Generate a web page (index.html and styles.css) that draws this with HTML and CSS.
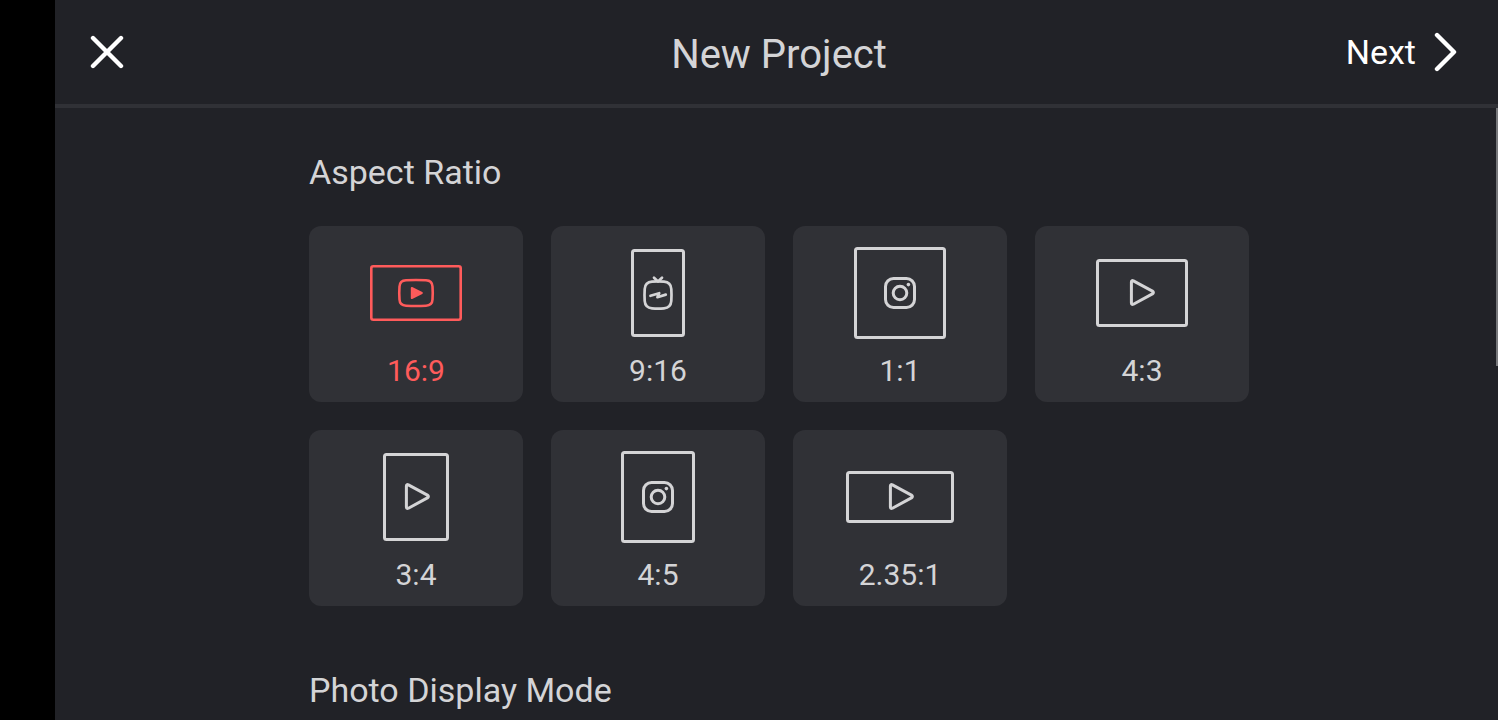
FILE: index.html
```html
<!DOCTYPE html>
<html lang="en">
<head>
    <meta charset="UTF-8">
    <meta name="viewport" content="width=device-width, initial-scale=1.0">
    <title>New Project</title>
    <link rel="stylesheet" href="styles.css">
</head>
<body>
    <!-- shared glyphs, all centered on 0,0 -->
    <svg class="sprite" aria-hidden="true">
        <symbol id="youtube" overflow="visible">
            <path d="M-10 -12.7Q0 -13.2 10 -12.7Q16.2 -12.4 16.5 -6.5Q17 0 16.5 6.5Q16.2 12.4 10 12.7Q0 13.2 -10 12.7Q-16.2 12.4 -16.5 6.5Q-17 0 -16.5 -6.5Q-16.2 -12.4 -10 -12.7Z"/>
            <path class="solid" d="M-4.2 -5L5.8 0L-4.2 5Z"/>
        </symbol>
        <symbol id="igtv" overflow="visible">
            <path class="thin" d="M-6 -11.3Q0 -11.8 6 -11.3Q12.8 -10.8 13.3 -4Q13.7 2 13.3 8Q12.8 14.8 6 15.3Q0 15.8 -6 15.3Q-12.8 14.8 -13.3 8Q-13.7 2 -13.3 -4Q-12.8 -10.8 -6 -11.3Z"/>
            <path class="thin" d="M-4 -15.3L0 -11.5L4 -15.3M-7.5 2.8L1.2 0.2L-0.6 4.2L7.8 1.6"/>
        </symbol>
        <symbol id="instagram" overflow="visible">
            <rect x="-14.5" y="-14.5" width="29" height="29" rx="8"/>
            <circle r="6.8"/>
            <circle class="dot" cx="8.4" cy="-8.4" r="1.8"/>
        </symbol>
        <symbol id="play" overflow="visible">
            <path d="M-9.6 -11Q-9.6 -13 -7.6 -12.1L11.4 -1.9Q13.4 -0.5 11.4 0.9L-7.6 11.2Q-9.6 12 -9.6 10Z"/>
        </symbol>
    </svg>

    <div class="app">
        <header class="topbar">
            <button class="close-btn" type="button" aria-label="Close">
                <svg width="34" height="34" viewBox="-17 -17 34 34"><path d="M-14 -14L14 14M14 -14L-14 14"/></svg>
            </button>
            <h1>New Project</h1>
            <button class="next-btn" type="button">
                Next
                <svg width="24" height="40" viewBox="0 0 24 40"><path d="M3 3L20 20L3 37"/></svg>
            </button>
        </header>

        <main class="content">
            <div class="column">
                <h2 id="ratioTitle">Aspect Ratio</h2>
                <div class="ratio-grid" role="radiogroup" aria-labelledby="ratioTitle">
                    <label class="card">
                        <input type="radio" name="ratio" value="16:9" checked>
                        <svg class="frame" width="108" height="92" viewBox="-54 -46 108 92"><rect x="-44.7" y="-26.7" width="89.4" height="53.4" rx="2"/><use href="#youtube"/></svg>
                        <span>16:9</span>
                    </label>
                    <label class="card">
                        <input type="radio" name="ratio" value="9:16">
                        <svg class="frame" width="108" height="92" viewBox="-54 -46 108 92"><rect x="-25.5" y="-42.5" width="51" height="85" rx="2"/><use href="#igtv"/></svg>
                        <span>9:16</span>
                    </label>
                    <label class="card">
                        <input type="radio" name="ratio" value="1:1">
                        <svg class="frame" width="108" height="92" viewBox="-54 -46 108 92"><rect x="-44.5" y="-44.5" width="89" height="89" rx="2"/><use href="#instagram"/></svg>
                        <span>1:1</span>
                    </label>
                    <label class="card">
                        <input type="radio" name="ratio" value="4:3">
                        <svg class="frame" width="108" height="92" viewBox="-54 -46 108 92"><rect x="-44.5" y="-32.5" width="89" height="65" rx="2"/><use href="#play" x="-1"/></svg>
                        <span>4:3</span>
                    </label>
                    <label class="card">
                        <input type="radio" name="ratio" value="3:4">
                        <svg class="frame" width="108" height="92" viewBox="-54 -46 108 92"><rect x="-31.5" y="-42.5" width="63" height="85" rx="2"/><use href="#play"/></svg>
                        <span>3:4</span>
                    </label>
                    <label class="card">
                        <input type="radio" name="ratio" value="4:5">
                        <svg class="frame" width="108" height="92" viewBox="-54 -46 108 92"><rect x="-35.5" y="-44.5" width="71" height="89" rx="2"/><use href="#instagram"/></svg>
                        <span>4:5</span>
                    </label>
                    <label class="card">
                        <input type="radio" name="ratio" value="2.35:1">
                        <svg class="frame" width="108" height="92" viewBox="-54 -46 108 92"><rect x="-52.5" y="-24.5" width="105" height="49" rx="2"/><use href="#play"/></svg>
                        <span>2.35:1</span>
                    </label>
                </div>

                <h2>Photo Display Mode</h2>
            </div>
        </main>
        <div class="scroll-thumb"></div>
    </div>
</body>
</html>
```
FILE: styles.css
```css
* {
    box-sizing: border-box;
}
body {
    margin: 0;
    background: #000;
    color: #d4d4d6;
    font-family: Roboto, sans-serif;
}
h1, h2 {
    margin: 0;
    font-weight: 400;
}
svg {
    display: block;
    fill: none;
    stroke: currentColor;
    stroke-width: 3;
    stroke-linecap: round;
    stroke-linejoin: round;
}
.sprite {
    position: absolute;
    width: 0;
    height: 0;
}
.solid {
    fill: currentColor;
    stroke-width: 2;
}
.thin {
    stroke-width: 2.7;
}
.dot {
    fill: currentColor;
    stroke: none;
}

/* black strip on the left is the camera cutout */
.app {
    position: relative;
    display: flex;
    flex-direction: column;
    height: 100vh;
    margin-left: 55px;
    background: #212227;
}
.topbar {
    display: grid;
    grid-template-columns: 1fr auto 1fr;
    align-items: center;
    height: 108px;
    flex-shrink: 0;
    padding: 0 40px 0 35px;
    border-bottom: 4px solid #303136;
}
.topbar h1 {
    font-size: 40px;
    line-height: 48px;
    padding: 6px 0 0 10px;
}
.topbar button {
    display: flex;
    align-items: center;
    padding: 0;
    border: none;
    background: none;
    color: #fff;
    font-family: inherit;
    font-size: 34px;
    line-height: 40px;
    cursor: pointer;
}
.topbar svg {
    stroke-width: 4.4;
}
.close-btn {
    justify-self: start;
}
.next-btn {
    justify-self: end;
    gap: 18px;
}

.content {
    flex: 1;
    min-height: 0;
    padding: 44px 0 0 5px;
    overflow-y: auto;
    scrollbar-width: none;
}
.column {
    max-width: 940px;
    margin: 0 auto;
}
.column h2 {
    font-size: 34px;
    line-height: 40px;
}
.ratio-grid {
    display: grid;
    grid-template-columns: repeat(auto-fill, 214px);
    gap: 28px;
    margin: 34px 0 64px;
}
.card {
    position: relative;
    display: flex;
    flex-direction: column;
    align-items: center;
    gap: 14px;
    padding: 21px 0 13px;
    border-radius: 12px;
    background: #303136;
    font-size: 30px;
    line-height: 36px;
    cursor: pointer;
}
.card input {
    position: absolute;
    opacity: 0;
}
.card:has(input:checked) {
    color: #ff5b5b;
}
.card:has(input:checked) .frame {
    stroke-width: 2.6;
}
.scroll-thumb {
    position: absolute;
    top: 108px;
    right: 0;
    width: 2px;
    height: 258px;
    background: #77787b;
}
```
